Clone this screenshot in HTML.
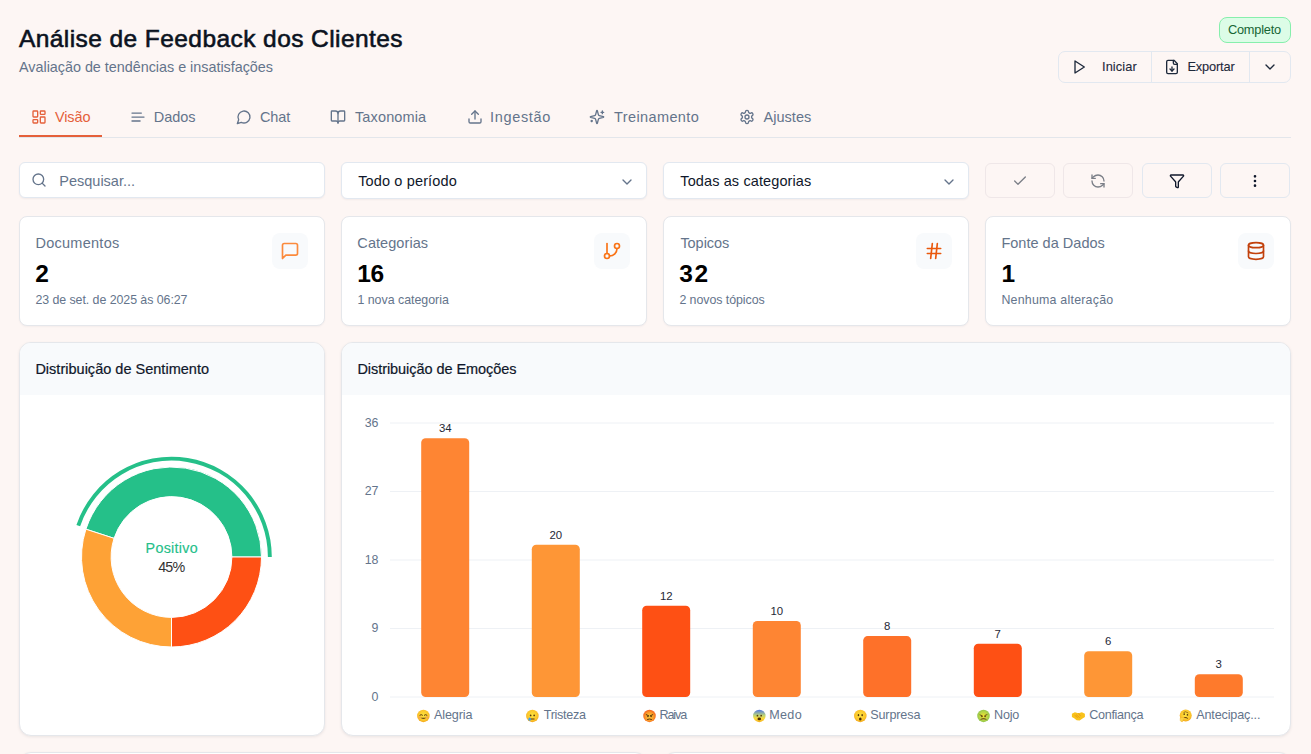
<!DOCTYPE html>
<html lang="pt">
<head>
<meta charset="utf-8">
<title>Análise de Feedback dos Clientes</title>
<style>
*{box-sizing:border-box;margin:0;padding:0}
html,body{width:1311px;height:754px;overflow:hidden}
body{background:#fdf6f4;font-family:"Liberation Sans",sans-serif;color:#0f172a;position:relative}
.a{position:absolute;white-space:nowrap}
svg.i{position:absolute;fill:none;stroke:currentColor;stroke-linecap:round;stroke-linejoin:round}
</style>
</head>
<body>
<div class="a" style="left:1219px;top:17px;width:72px;height:26px;border:1px solid #86efac;background:#dcfce7;border-radius:8px"></div>
<div class="a" style="left:1058px;top:51px;width:233px;height:32px;border:1px solid #e2e8f0;border-radius:7px"></div>
<div class="a" style="left:1151px;top:52px;width:1px;height:30px;background:#e2e8f0"></div>
<div class="a" style="left:1249px;top:52px;width:1px;height:30px;background:#e2e8f0"></div>
<svg class="i" style="left:1071px;top:59px;color:#1e293b;opacity:1" width="16" height="16" viewBox="0 0 24 24" stroke-width="2"><polygon points="6 3 20 12 6 21 6 3"/></svg>
<svg class="i" style="left:1164px;top:59px;color:#1e293b;opacity:1" width="16" height="16" viewBox="0 0 24 24" stroke-width="2"><path d="M15 2H6a2 2 0 0 0-2 2v16a2 2 0 0 0 2 2h12a2 2 0 0 0 2-2V7Z"/><path d="M14 2v4a2 2 0 0 0 2 2h4"/><path d="M12 18v-6"/><path d="m9 15 3 3 3-3"/></svg>
<svg class="i" style="left:1262px;top:59px;color:#1e293b;opacity:1" width="16" height="16" viewBox="0 0 24 24" stroke-width="2"><path d="m6 9 6 6 6-6"/></svg>
<div class="a" style="left:19px;top:137px;width:1272px;height:1px;background:#e3e6eb"></div>
<div class="a" style="left:19px;top:135px;width:83px;height:2px;background:#e5603a"></div>
<svg class="i" style="left:30.7px;top:109px;color:#e5603a;opacity:1" width="16" height="16" viewBox="0 0 24 24" stroke-width="2"><rect width="7" height="9" x="3" y="3" rx="1"/><rect width="7" height="5" x="14" y="3" rx="1"/><rect width="7" height="9" x="14" y="12" rx="1"/><rect width="7" height="5" x="3" y="16" rx="1"/></svg>
<svg class="i" style="left:129.7px;top:109px;color:#64748b;opacity:1" width="16" height="16" viewBox="0 0 24 24" stroke-width="2"><path d="M17 6.1H3"/><path d="M21 12.1H3"/><path d="M15.1 18H3"/></svg>
<svg class="i" style="left:235.8px;top:109px;color:#64748b;opacity:1" width="16" height="16" viewBox="0 0 24 24" stroke-width="2"><path d="M7.9 20A9 9 0 1 0 4 16.1L2 22Z"/></svg>
<svg class="i" style="left:330.2px;top:109px;color:#64748b;opacity:1" width="16" height="16" viewBox="0 0 24 24" stroke-width="2"><path d="M12 7v14"/><path d="M3 18a1 1 0 0 1-1-1V4a1 1 0 0 1 1-1h5a4 4 0 0 1 4 4 4 4 0 0 1 4-4h5a1 1 0 0 1 1 1v13a1 1 0 0 1-1 1h-6a3 3 0 0 0-3 3 3 3 0 0 0-3-3z"/></svg>
<svg class="i" style="left:466.5px;top:109px;color:#64748b;opacity:1" width="16" height="16" viewBox="0 0 24 24" stroke-width="2"><path d="M21 15v4a2 2 0 0 1-2 2H5a2 2 0 0 1-2-2v-4"/><polyline points="17 8 12 3 7 8"/><line x1="12" x2="12" y1="3" y2="15"/></svg>
<svg class="i" style="left:589.4px;top:109px;color:#64748b;opacity:1" width="16" height="16" viewBox="0 0 24 24" stroke-width="2"><path d="M9.937 15.5A2 2 0 0 0 8.5 14.063l-6.135-1.582a.5.5 0 0 1 0-.962L8.5 9.936A2 2 0 0 0 9.937 8.5l1.582-6.135a.5.5 0 0 1 .963 0L14.063 8.5A2 2 0 0 0 15.5 9.937l6.135 1.581a.5.5 0 0 1 0 .964L15.5 14.063a2 2 0 0 0-1.437 1.437l-1.582 6.135a.5.5 0 0 1-.963 0z"/><path d="M20 3v4"/><path d="M22 5h-4"/><path d="M4 17v2"/><path d="M5 18H3"/></svg>
<svg class="i" style="left:739.1px;top:109px;color:#64748b;opacity:1" width="16" height="16" viewBox="0 0 24 24" stroke-width="2"><path d="M12.22 2h-.44a2 2 0 0 0-2 2v.18a2 2 0 0 1-1 1.73l-.43.25a2 2 0 0 1-2 0l-.15-.08a2 2 0 0 0-2.73.73l-.22.38a2 2 0 0 0 .73 2.73l.15.1a2 2 0 0 1 1 1.72v.51a2 2 0 0 1-1 1.74l-.15.09a2 2 0 0 0-.73 2.73l.22.38a2 2 0 0 0 2.73.73l.15-.08a2 2 0 0 1 2 0l.43.25a2 2 0 0 1 1 1.73V20a2 2 0 0 0 2 2h.44a2 2 0 0 0 2-2v-.18a2 2 0 0 1 1-1.73l.43-.25a2 2 0 0 1 2 0l.15.08a2 2 0 0 0 2.73-.73l.22-.39a2 2 0 0 0-.73-2.73l-.15-.08a2 2 0 0 1-1-1.74v-.5a2 2 0 0 1 1-1.74l.15-.09a2 2 0 0 0 .73-2.73l-.22-.38a2 2 0 0 0-2.73-.73l-.15.08a2 2 0 0 1-2 0l-.43-.25a2 2 0 0 1-1-1.73V4a2 2 0 0 0-2-2z"/><circle cx="12" cy="12" r="3"/></svg>
<div class="a" style="left:19px;top:162px;width:306px;height:36px;background:#fff;border:1px solid #e2e8f0;border-radius:6px;box-shadow:0 1px 2px rgba(15,23,42,.05)"></div>
<svg class="i" style="left:31px;top:172px;color:#64748b;opacity:1" width="16" height="16" viewBox="0 0 24 24" stroke-width="2"><circle cx="11" cy="11" r="8"/><path d="m21 21-4.34-4.34"/></svg>
<div class="a" style="left:341px;top:162px;width:306px;height:37px;background:#fff;border:1px solid #e2e8f0;border-radius:6px;box-shadow:0 1px 2px rgba(15,23,42,.05)"></div>
<svg class="i" style="left:619px;top:173.5px;color:#64748b;opacity:1" width="16" height="16" viewBox="0 0 24 24" stroke-width="2"><path d="m6 9 6 6 6-6"/></svg>
<div class="a" style="left:663px;top:162px;width:306px;height:37px;background:#fff;border:1px solid #e2e8f0;border-radius:6px;box-shadow:0 1px 2px rgba(15,23,42,.05)"></div>
<svg class="i" style="left:941px;top:173.5px;color:#64748b;opacity:1" width="16" height="16" viewBox="0 0 24 24" stroke-width="2"><path d="m6 9 6 6 6-6"/></svg>
<div class="a" style="left:985px;top:163px;width:70px;height:35px;border:1px solid #efe7e8;border-radius:6px"></div>
<svg class="i" style="left:1012px;top:172.5px;color:#7b7f87;opacity:1" width="16" height="16" viewBox="0 0 24 24" stroke-width="2"><path d="M20 6 9 17l-5-5"/></svg>
<div class="a" style="left:1063px;top:163px;width:70px;height:35px;border:1px solid #efe7e8;border-radius:6px"></div>
<svg class="i" style="left:1090px;top:172.5px;color:#7b7f87;opacity:1" width="16" height="16" viewBox="0 0 24 24" stroke-width="2"><path d="M21 12a9 9 0 0 0-9-9 9.75 9.75 0 0 0-6.74 2.74L3 8"/><path d="M3 3v5h5"/><path d="M3 12a9 9 0 0 0 9 9 9.75 9.75 0 0 0 6.74-2.74L21 16"/><path d="M16 16h5v5"/></svg>
<div class="a" style="left:1142px;top:163px;width:70px;height:35px;border:1px solid #e2e8f0;border-radius:6px"></div>
<svg class="i" style="left:1169px;top:172.5px;color:#0f172a;opacity:1" width="16" height="16" viewBox="0 0 24 24" stroke-width="2"><path d="M10 20a1 1 0 0 0 .553.895l2 1A1 1 0 0 0 14 21v-7a2 2 0 0 1 .517-1.341L21.74 4.67A1 1 0 0 0 21 3H3a1 1 0 0 0-.742 1.67l7.225 7.989A2 2 0 0 1 10 14z"/></svg>
<div class="a" style="left:1220px;top:163px;width:70px;height:35px;border:1px solid #e2e8f0;border-radius:6px"></div>
<svg class="i" style="left:1247px;top:172.5px;color:#0f172a;opacity:1" width="16" height="16" viewBox="0 0 24 24" stroke-width="2"><circle cx="12" cy="12" r="1"/><circle cx="12" cy="5" r="1"/><circle cx="12" cy="19" r="1"/></svg>
<div class="a" style="left:19px;top:216px;width:306px;height:110px;background:#fff;border:1px solid #e5e7eb;border-radius:8px;box-shadow:0 1px 2px rgba(15,23,42,.04)"></div>
<div class="a" style="left:272px;top:233px;width:36px;height:36px;background:#f8fafc;border-radius:8px"></div>
<svg class="i" style="left:280px;top:241px;color:#fb8a3c;opacity:1" width="20" height="20" viewBox="0 0 24 24" stroke-width="2"><path d="M21 15a2 2 0 0 1-2 2H7l-4 4V5a2 2 0 0 1 2-2h14a2 2 0 0 1 2 2z"/></svg>
<div class="a" style="left:341px;top:216px;width:306px;height:110px;background:#fff;border:1px solid #e5e7eb;border-radius:8px;box-shadow:0 1px 2px rgba(15,23,42,.04)"></div>
<div class="a" style="left:594px;top:233px;width:36px;height:36px;background:#f8fafc;border-radius:8px"></div>
<svg class="i" style="left:602px;top:241px;color:#f97316;opacity:1" width="20" height="20" viewBox="0 0 24 24" stroke-width="2"><line x1="6" x2="6" y1="3" y2="15"/><circle cx="18" cy="6" r="3"/><circle cx="6" cy="18" r="3"/><path d="M18 9a9 9 0 0 1-9 9"/></svg>
<div class="a" style="left:663px;top:216px;width:306px;height:110px;background:#fff;border:1px solid #e5e7eb;border-radius:8px;box-shadow:0 1px 2px rgba(15,23,42,.04)"></div>
<div class="a" style="left:916px;top:233px;width:36px;height:36px;background:#f8fafc;border-radius:8px"></div>
<svg class="i" style="left:924px;top:241px;color:#ea580c;opacity:1" width="20" height="20" viewBox="0 0 24 24" stroke-width="2"><line x1="4" x2="20" y1="9" y2="9"/><line x1="4" x2="20" y1="15" y2="15"/><line x1="10" x2="8" y1="3" y2="21"/><line x1="16" x2="14" y1="3" y2="21"/></svg>
<div class="a" style="left:985px;top:216px;width:306px;height:110px;background:#fff;border:1px solid #e5e7eb;border-radius:8px;box-shadow:0 1px 2px rgba(15,23,42,.04)"></div>
<div class="a" style="left:1238px;top:233px;width:36px;height:36px;background:#f8fafc;border-radius:8px"></div>
<svg class="i" style="left:1246px;top:241px;color:#c2410c;opacity:1" width="20" height="20" viewBox="0 0 24 24" stroke-width="2"><ellipse cx="12" cy="5" rx="9" ry="3"/><path d="M3 5V19A9 3 0 0 0 21 19V5"/><path d="M3 12A9 3 0 0 0 21 12"/></svg>
<div class="a" style="left:19px;top:342px;width:306px;height:394px;background:#fff;border:1px solid #e5e7eb;border-radius:12px;box-shadow:0 1px 3px rgba(15,23,42,.08);overflow:hidden"><div style="position:absolute;left:0;top:0;right:0;height:52px;background:#f8fafc"></div></div>
<div class="a" style="left:341px;top:342px;width:950px;height:394px;background:#fff;border:1px solid #e5e7eb;border-radius:12px;box-shadow:0 1px 3px rgba(15,23,42,.08);overflow:hidden"><div style="position:absolute;left:0;top:0;right:0;height:52px;background:#f8fafc"></div></div>
<svg class="s" width="1311" height="754" style="position:absolute;left:0;top:0"><path d="M261.50 557.00A90.0 90.0 0 0 0 85.90 529.19L114.06 538.34A60.4 60.4 0 0 1 231.90 557.00Z" fill="#25c089" stroke="#fff" stroke-width="1" stroke-linejoin="round"/><path d="M171.50 647.00A90.0 90.0 0 0 0 261.50 557.00L231.90 557.00A60.4 60.4 0 0 1 171.50 617.40Z" fill="#fe5014" stroke="#fff" stroke-width="1" stroke-linejoin="round"/><path d="M85.90 529.19A90.0 90.0 0 0 0 171.50 647.00L171.50 617.40A60.4 60.4 0 0 1 114.06 538.34Z" fill="#fea236" stroke="#fff" stroke-width="1" stroke-linejoin="round"/><path d="M271.80 557.00A100.3 100.3 0 0 0 76.44 525.01L80.14 526.25A96.4 96.4 0 0 1 267.90 557.00Z" fill="#25c089"/></svg>
<svg width="1311" height="754" style="position:absolute;left:0;top:0"><line x1="390" x2="1274" y1="697.0" y2="697.0" stroke="#eef1f5" stroke-width="1"/><line x1="390" x2="1274" y1="628.5" y2="628.5" stroke="#eef1f5" stroke-width="1"/><line x1="390" x2="1274" y1="560.0" y2="560.0" stroke="#eef1f5" stroke-width="1"/><line x1="390" x2="1274" y1="491.5" y2="491.5" stroke="#eef1f5" stroke-width="1"/><line x1="390" x2="1274" y1="423.0" y2="423.0" stroke="#eef1f5" stroke-width="1"/><rect x="421.2" y="438.2" width="48" height="258.8" rx="4.5" fill="#fe8533"/><rect x="531.8" y="544.8" width="48" height="152.2" rx="4.5" fill="#fe9636"/><rect x="642.2" y="605.7" width="48" height="91.3" rx="4.5" fill="#fe5014"/><rect x="752.8" y="620.9" width="48" height="76.1" rx="4.5" fill="#fe8533"/><rect x="863.2" y="636.1" width="48" height="60.9" rx="4.5" fill="#fe7129"/><rect x="973.8" y="643.7" width="48" height="53.3" rx="4.5" fill="#fe5014"/><rect x="1084.2" y="651.3" width="48" height="45.7" rx="4.5" fill="#fe9636"/><rect x="1194.8" y="674.2" width="48" height="22.8" rx="4.5" fill="#fe7a2c"/></svg>
<svg width="1311" height="754" style="position:absolute;left:0;top:0"><defs><radialGradient id="gy" cx="50%" cy="45%" r="55%"><stop offset="0" stop-color="#fde541"/><stop offset=".75" stop-color="#fbc52a"/><stop offset="1" stop-color="#f3a51c"/></radialGradient><radialGradient id="gr" cx="50%" cy="55%" r="55%"><stop offset="0" stop-color="#fcd040"/><stop offset=".6" stop-color="#f99a2a"/><stop offset="1" stop-color="#f25a1e"/></radialGradient><linearGradient id="gb" x1="0" y1="0" x2="0" y2="1"><stop offset="0" stop-color="#4f74e6"/><stop offset=".45" stop-color="#b9d37a"/><stop offset=".7" stop-color="#fbd93a"/><stop offset="1" stop-color="#f5b21f"/></linearGradient><radialGradient id="gg" cx="50%" cy="50%" r="55%"><stop offset="0" stop-color="#f2e232"/><stop offset=".6" stop-color="#b8d646"/><stop offset="1" stop-color="#86bf4e"/></radialGradient></defs><g transform="translate(416.9 709.4) scale(0.5)"><circle cx="13" cy="13" r="12.5" fill="url(#gy)"/><path d="M6 11.5q2.6-2.4 5.2 0M14.8 11.5q2.6-2.4 5.2 0" stroke="#5b3a0c" stroke-width="2" fill="none" stroke-linecap="round"/><circle cx="5.5" cy="16" r="2.3" fill="#f28b6e" opacity=".55"/><circle cx="20.5" cy="16" r="2.3" fill="#f28b6e" opacity=".55"/><path d="M7.5 16.5q5.5 5.5 11 0z" fill="#6b4a14"/></g><g transform="translate(525.9 709.4) scale(0.5)"><circle cx="13" cy="13" r="12.5" fill="url(#gy)"/><circle cx="9.5" cy="12" r="1.7" fill="#5b3a0c"/><circle cx="16.5" cy="12" r="1.7" fill="#5b3a0c"/><path d="M9.5 19.2h7" stroke="#5b3a0c" stroke-width="2" stroke-linecap="round"/><ellipse cx="7.5" cy="19.5" rx="2.4" ry="3.2" fill="#3aa0f0"/></g><g transform="translate(643.0 709.4) scale(0.5)"><circle cx="13" cy="13" r="12.5" fill="url(#gr)"/><path d="M6.5 10.5l5 2.3M19.5 10.5l-5 2.3" stroke="#5b3a0c" stroke-width="2" stroke-linecap="round"/><circle cx="9.8" cy="14" r="1.6" fill="#5b3a0c"/><circle cx="16.2" cy="14" r="1.6" fill="#5b3a0c"/><path d="M9 20q4-2 8 0" stroke="#5b3a0c" stroke-width="2" fill="none" stroke-linecap="round"/></g><g transform="translate(752.8 709.4) scale(0.5)"><circle cx="13" cy="13" r="12.5" fill="url(#gb)"/><circle cx="9.3" cy="12.5" r="1.7" fill="#5b3a0c"/><circle cx="16.7" cy="12.5" r="1.7" fill="#5b3a0c"/><ellipse cx="13" cy="19" rx="3.6" ry="2.6" fill="#4a2c08"/></g><g transform="translate(853.8 709.4) scale(0.5)"><circle cx="13" cy="13" r="12.5" fill="url(#gy)"/><ellipse cx="9.3" cy="11.5" rx="1.6" ry="2.1" fill="#5b3a0c"/><ellipse cx="16.7" cy="11.5" rx="1.6" ry="2.1" fill="#5b3a0c"/><ellipse cx="13" cy="19.2" rx="2.6" ry="3.2" fill="#4a2c08"/></g><g transform="translate(977.0 709.4) scale(0.5)"><circle cx="13" cy="13" r="12.5" fill="url(#gg)"/><path d="M6 11l4 1.5M20 10.5l-4 1.5" stroke="#5b3a0c" stroke-width="1.6" stroke-linecap="round"/><circle cx="9.8" cy="14" r="1.6" fill="#5b3a0c"/><circle cx="16.2" cy="14" r="1.6" fill="#5b3a0c"/><path d="M8 20q5-3 10 0" stroke="#7a5a20" stroke-width="2.2" fill="none" stroke-linecap="round"/></g><g transform="translate(1071.9 709.4) scale(0.5)"><path d="M0 8.5L6 5.5L13 7.5L20 5.5L26 8.5L26 15L20.5 18.5L15.5 22L9.5 21.5L4.5 17.5L0 15Z" fill="#f9c21b"/><path d="M6 12l5 4M9 11l6 5M13 8l4 5" stroke="#e08a10" stroke-width="1.2" fill="none" stroke-linecap="round"/></g><g transform="translate(1178.7 709.4) scale(0.5)"><circle cx="14" cy="12" r="12" fill="url(#gy)"/><circle cx="11" cy="9.5" r="1.6" fill="#5b3a0c"/><circle cx="17.5" cy="11" r="1.6" fill="#5b3a0c"/><path d="M10.5 6l3-1.2M15.5 5.5l3 1.5" stroke="#5b3a0c" stroke-width="1.3" stroke-linecap="round"/><path d="M11 16.5q4-1.5 6.5 1" stroke="#5b3a0c" stroke-width="2" fill="none" stroke-linecap="round"/><path d="M3 17.5q2-2 5.5-1.2l5 1.2q1 1.5-1 2.2l-3.5 0.3l-1 4.5q-4 .5-5-2.5z" fill="#fbd34a" stroke="#f0a81c" stroke-width=".8"/></g></svg>
<div class="a" style="left:19px;top:752px;width:628px;height:100px;background:#fff;border:1px solid #e5e7eb;border-radius:12px;box-shadow:0 1px 3px rgba(15,23,42,.08);overflow:hidden"></div>
<div class="a" style="left:663px;top:752px;width:628px;height:100px;background:#fff;border:1px solid #e5e7eb;border-radius:12px;box-shadow:0 1px 3px rgba(15,23,42,.08);overflow:hidden"></div>
<div class="a t" id="title" style="left:19.00px;top:22.61px;font-size:24.5px;line-height:32px;-webkit-text-stroke:0.6px #0b1220;color:#0b1220;letter-spacing:0.423px;">Análise de Feedback dos Clientes</div>
<div class="a t" id="sub" style="left:19.01px;top:58.11px;font-size:14.4px;line-height:19px;color:#64748b;letter-spacing:-0.024px;">Avaliação de tendências e insatisfações</div>
<div class="a t" id="badge" style="left:1227.93px;top:21.26px;font-size:12.8px;line-height:17px;color:#166534;letter-spacing:-0.230px;">Completo</div>
<div class="a t" id="ini" style="left:1101.99px;top:57.76px;font-size:12.8px;line-height:17px;-webkit-text-stroke:0.1px #1e293b;color:#1e293b;letter-spacing:0.108px;">Iniciar</div>
<div class="a t" id="exp" style="left:1187.39px;top:57.76px;font-size:12.8px;line-height:17px;-webkit-text-stroke:0.1px #1e293b;color:#1e293b;letter-spacing:-0.156px;">Exportar</div>
<div class="a t" id="tab0" style="left:54.95px;top:107.67px;font-size:14.5px;line-height:19px;color:#e5603a;letter-spacing:-0.101px;">Visão</div>
<div class="a t" id="tab1" style="left:153.74px;top:107.67px;font-size:14.5px;line-height:19px;color:#64748b;letter-spacing:-0.055px;">Dados</div>
<div class="a t" id="tab2" style="left:260.06px;top:107.67px;font-size:14.5px;line-height:19px;color:#64748b;letter-spacing:-0.145px;">Chat</div>
<div class="a t" id="tab3" style="left:354.99px;top:107.67px;font-size:14.5px;line-height:19px;color:#64748b;letter-spacing:0.135px;">Taxonomia</div>
<div class="a t" id="tab4" style="left:489.97px;top:107.67px;font-size:14.5px;line-height:19px;color:#64748b;letter-spacing:0.674px;">Ingestão</div>
<div class="a t" id="tab5" style="left:613.99px;top:107.67px;font-size:14.5px;line-height:19px;color:#64748b;letter-spacing:0.397px;">Treinamento</div>
<div class="a t" id="tab6" style="left:763.57px;top:107.67px;font-size:14.5px;line-height:19px;color:#64748b;letter-spacing:0.022px;">Ajustes</div>
<div class="a t" id="search" style="left:59.25px;top:171.97px;font-size:14.5px;line-height:19px;color:#64748b;letter-spacing:0.003px;">Pesquisar...</div>
<div class="a t" id="per" style="left:358.17px;top:171.97px;font-size:14.5px;line-height:19px;color:#0f172a;letter-spacing:0.144px;">Todo o período</div>
<div class="a t" id="cat" style="left:680.30px;top:171.97px;font-size:14.5px;line-height:19px;color:#0f172a;letter-spacing:0.113px;">Todas as categorias</div>
<div class="a t" id="kl0" style="left:35.40px;top:233.87px;font-size:14.5px;line-height:19px;color:#64748b;letter-spacing:0.271px;">Documentos</div>
<div class="a t" id="kv0" style="left:35.36px;top:257.51px;font-size:24.5px;line-height:32px;font-weight:700;color:#000;letter-spacing:10.628px;">2</div>
<div class="a t" id="ks0" style="left:35.40px;top:291.80px;font-size:12.4px;line-height:17px;color:#64748b;letter-spacing:-0.059px;">23 de set. de 2025 às 06:27</div>
<div class="a t" id="kl1" style="left:357.35px;top:233.87px;font-size:14.5px;line-height:19px;color:#64748b;letter-spacing:0.067px;">Categorias</div>
<div class="a t" id="kv1" style="left:357.31px;top:257.51px;font-size:24.5px;line-height:32px;font-weight:700;color:#000;letter-spacing:-0.350px;">16</div>
<div class="a t" id="ks1" style="left:357.38px;top:291.80px;font-size:12.4px;line-height:17px;color:#64748b;letter-spacing:-0.011px;">1 nova categoria</div>
<div class="a t" id="kl2" style="left:680.39px;top:233.87px;font-size:14.5px;line-height:19px;color:#64748b;letter-spacing:-0.041px;">Topicos</div>
<div class="a t" id="kv2" style="left:679.36px;top:257.51px;font-size:24.5px;line-height:32px;font-weight:700;color:#000;letter-spacing:1.513px;">32</div>
<div class="a t" id="ks2" style="left:679.40px;top:291.80px;font-size:12.4px;line-height:17px;color:#64748b;letter-spacing:-0.059px;">2 novos tópicos</div>
<div class="a t" id="kl3" style="left:1001.38px;top:233.87px;font-size:14.5px;line-height:19px;color:#64748b;letter-spacing:0.019px;">Fonte da Dados</div>
<div class="a t" id="kv3" style="left:1001.39px;top:257.51px;font-size:24.5px;line-height:32px;font-weight:700;color:#000;letter-spacing:-5.635px;">1</div>
<div class="a t" id="ks3" style="left:1001.40px;top:291.80px;font-size:12.4px;line-height:17px;color:#64748b;letter-spacing:0.227px;">Nenhuma alteração</div>
<div class="a t" id="ct1" style="left:35.39px;top:359.97px;font-size:14.5px;line-height:19px;-webkit-text-stroke:0.2px #0f172a;color:#0f172a;letter-spacing:0.013px;">Distribuição de Sentimento</div>
<div class="a t" id="ct2" style="left:357.41px;top:359.97px;font-size:14.5px;line-height:19px;-webkit-text-stroke:0.2px #0f172a;color:#0f172a;letter-spacing:-0.060px;">Distribuição de Emoções</div>
<div class="a t" id="pos" style="left:145.57px;top:538.64px;font-size:14.3px;line-height:19px;-webkit-text-stroke:0.15px #25c089;color:#25c089;letter-spacing:0.301px;">Positivo</div>
<div class="a t" id="pct" style="left:158.18px;top:558.34px;font-size:14.3px;line-height:19px;color:#333;letter-spacing:-0.786px;">45%</div>
<div class="a t" id="bv0" style="left:345.25px;width:200px;text-align:center;top:421.17px;font-size:11.4px;line-height:15px;color:#1f2937;">34</div>
<div class="a t" id="bl0" style="left:434.07px;top:707.33px;font-size:12.6px;line-height:17px;color:#64748b;letter-spacing:-0.139px;">Alegria</div>
<div class="a t" id="bv1" style="left:455.75px;width:200px;text-align:center;top:527.73px;font-size:11.4px;line-height:15px;color:#1f2937;">20</div>
<div class="a t" id="bl1" style="left:543.72px;top:707.33px;font-size:12.6px;line-height:17px;color:#64748b;letter-spacing:-0.292px;">Tristeza</div>
<div class="a t" id="bv2" style="left:566.25px;width:200px;text-align:center;top:588.61px;font-size:11.4px;line-height:15px;color:#1f2937;">12</div>
<div class="a t" id="bl2" style="left:659.38px;top:707.33px;font-size:12.6px;line-height:17px;color:#64748b;letter-spacing:-1.062px;">Raiva</div>
<div class="a t" id="bv3" style="left:676.75px;width:200px;text-align:center;top:603.84px;font-size:11.4px;line-height:15px;color:#1f2937;">10</div>
<div class="a t" id="bl3" style="left:769.28px;top:707.33px;font-size:12.6px;line-height:17px;color:#64748b;letter-spacing:0.304px;">Medo</div>
<div class="a t" id="bv4" style="left:787.25px;width:200px;text-align:center;top:619.06px;font-size:11.4px;line-height:15px;color:#1f2937;">8</div>
<div class="a t" id="bl4" style="left:870.19px;top:707.33px;font-size:12.6px;line-height:17px;color:#64748b;letter-spacing:-0.123px;">Surpresa</div>
<div class="a t" id="bv5" style="left:897.75px;width:200px;text-align:center;top:626.67px;font-size:11.4px;line-height:15px;color:#1f2937;">7</div>
<div class="a t" id="bl5" style="left:994.09px;top:707.33px;font-size:12.6px;line-height:17px;color:#64748b;letter-spacing:-0.236px;">Nojo</div>
<div class="a t" id="bv6" style="left:1008.25px;width:200px;text-align:center;top:634.28px;font-size:11.4px;line-height:15px;color:#1f2937;">6</div>
<div class="a t" id="bl6" style="left:1089.22px;top:707.33px;font-size:12.6px;line-height:17px;color:#64748b;letter-spacing:-0.314px;">Confiança</div>
<div class="a t" id="bv7" style="left:1118.75px;width:200px;text-align:center;top:657.11px;font-size:11.4px;line-height:15px;color:#1f2937;">3</div>
<div class="a t" id="bl7" style="left:1196.20px;top:707.33px;font-size:12.6px;line-height:17px;color:#64748b;letter-spacing:-0.142px;">Antecipaç...</div>
<div class="a t" id="yl0" style="left:178.44px;width:200px;text-align:right;top:688.60px;font-size:12.4px;line-height:17px;color:#64748b;">0</div>
<div class="a t" id="yl1" style="left:178.44px;width:200px;text-align:right;top:620.10px;font-size:12.4px;line-height:17px;color:#64748b;">9</div>
<div class="a t" id="yl2" style="left:178.44px;width:200px;text-align:right;top:551.60px;font-size:12.4px;line-height:17px;color:#64748b;">18</div>
<div class="a t" id="yl3" style="left:178.44px;width:200px;text-align:right;top:483.10px;font-size:12.4px;line-height:17px;color:#64748b;">27</div>
<div class="a t" id="yl4" style="left:178.44px;width:200px;text-align:right;top:414.60px;font-size:12.4px;line-height:17px;color:#64748b;">36</div>
</body>
</html>
